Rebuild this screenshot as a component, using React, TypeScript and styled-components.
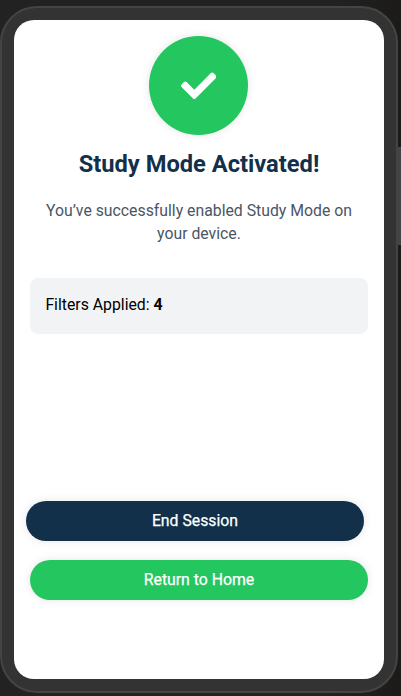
import React from "react";
import styled, { createGlobalStyle } from "styled-components";
import { FaCheck } from "react-icons/fa";

const GlobalStyle = createGlobalStyle`
  * { box-sizing: border-box; }
  body { margin: 0; background: #222; font-family: Roboto, sans-serif; }
`;

const Stage = styled.main`
  position: relative;
  height: 696px;
  padding-top: 6px;
  overflow: hidden;
  background: linear-gradient(90deg, #222 0, #222 330px, #1c1b19 400px);
`;

const Phone = styled.div`
  width: 398px;
  height: 686.5px;
  padding: 12px;
  border: 2px solid #444;
  border-radius: 37px;
  background: #333;
`;

const SideButton = styled.div`
  position: absolute;
  top: 147px;
  right: 0;
  width: 3px;
  height: 98px;
  background: #444;
`;

const Screen = styled.section`
  display: flex;
  flex-direction: column;
  width: 370px;
  height: 658.5px;
  padding: 16px 15.7px 0;
  border-radius: 20px;
  background: #fff;
`;

const Badge = styled.div`
  display: flex;
  flex-shrink: 0;
  align-items: center;
  justify-content: center;
  align-self: center;
  width: 99px;
  height: 99px;
  margin-right: 1px;
  border-radius: 50%;
  background: #24c65f;
  color: #fff;
  box-shadow: 0 0 10px rgba(0, 0, 0, 0.1);
`;

const Title = styled.h1`
  margin: 13px 0 0;
  color: #12304a;
  font-size: 23.7px;
  font-weight: 700;
  line-height: 32px;
  text-align: center;
`;

const Message = styled.p`
  margin: 19px 0 0;
  color: #4b5563;
  font-size: 15.8px;
  line-height: 23px;
  text-align: center;
`;

const Summary = styled.div`
  height: 56px;
  margin-top: 33px;
  padding: 0 15.7px;
  border-radius: 8px;
  background: #f2f3f5;
  color: #000;
  font-size: 15.8px;
  line-height: 53px;
`;

const Actions = styled.div`
  display: flex;
  flex-direction: column;
  gap: 19.5px;
  margin-top: 167px;
`;

const ActionButton = styled.button<{ $color: string; $shift?: number }>`
  width: 338.6px;
  height: 39.5px;
  margin: 0 0 0 ${({ $shift = 0 }) => $shift}px;
  padding: 0;
  border: 0;
  border-radius: 20px;
  background: ${({ $color }) => $color};
  color: #fff;
  font: 400 15.8px/39px Roboto, sans-serif;
  -webkit-text-stroke: 0.25px currentColor;
  box-shadow: 0 0 10px rgba(0, 0, 0, 0.1);
`;

export default function App() {
  return (
    <Stage>
      <GlobalStyle />
      <SideButton />
      <Phone>
        <Screen>
          <Badge>
            <FaCheck size={35.5} />
          </Badge>
          <Title>Study Mode Activated!</Title>
          <Message>
            You’ve successfully enabled Study Mode on
            <br />
            your device.
          </Message>
          <Summary>
            Filters Applied: <strong>4</strong>
          </Summary>
          <Actions>
            <ActionButton $color="#12304a" $shift={-4}>End Session</ActionButton>
            <ActionButton $color="#24c65f">Return to Home</ActionButton>
          </Actions>
        </Screen>
      </Phone>
    </Stage>
  );
}
